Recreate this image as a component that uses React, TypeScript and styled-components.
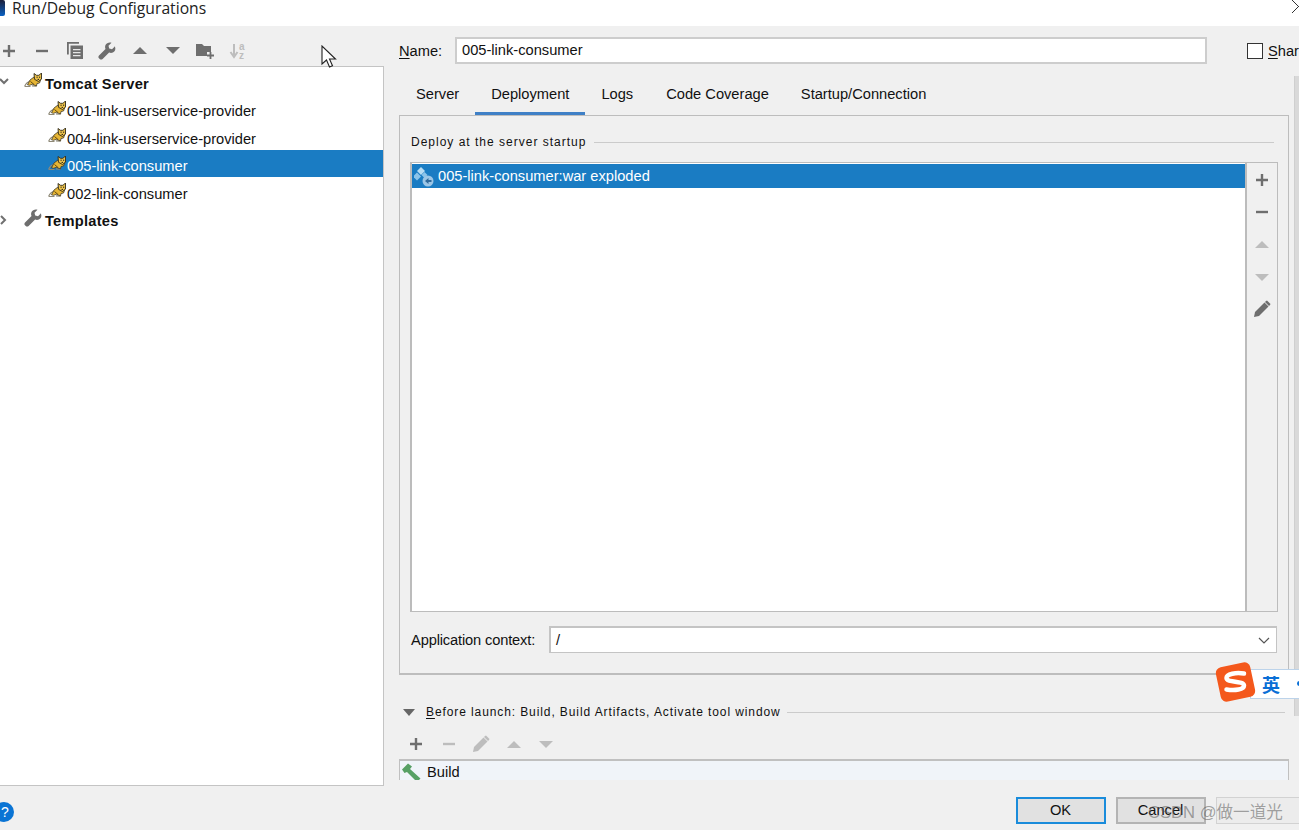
import React from "react";
import styled, { createGlobalStyle } from "styled-components";

const Global = createGlobalStyle`
  html, body { margin: 0; padding: 0; background: #f0f0f0; overflow: hidden; }
  * { box-sizing: border-box; }
  #root { font-family: "Liberation Sans", Arial, sans-serif; font-size: 14.67px; color: #111; }
`;

const Dialog = styled.div`
  position: relative; width: 1299px; height: 830px; display: flex; flex-direction: column;
  background: #f0f0f0; overflow: hidden;
`;
const TitleBar = styled.div`
  height: 26px; flex: none; background: #fff; display: flex; align-items: flex-start; justify-content: space-between;
`;
const TitleLeft = styled.div`display: flex; align-items: center; gap: 7px; height: 16px;`;
const AppMark = styled.span`width: 5px; height: 16px; background: linear-gradient(#1b1f3a, #0b62c4); border-radius: 0 2px 2px 0;`;
const TitleText = styled.span`font-family: "Open Sans", sans-serif; font-size: 15.7px; line-height: 16px; color: #222; white-space: nowrap;`;
const CloseMark = styled.svg`width: 7px; height: 13px; flex: none;`;

const Main = styled.div`flex: 1; min-height: 0; display: flex;`;
const Sidebar = styled.aside`width: 384px; flex: none; display: flex; flex-direction: column;`;
const Toolbar = styled.div`height: 40px; flex: none; display: flex; align-items: center; margin-left: -7px; padding-top: 9px;`;
const ToolSlot = styled.span`width: 32.7px; height: 18px; display: flex; align-items: center; justify-content: center; flex: none;`;
const Tree = styled.div`
  flex: 1; background: #fff; border: solid #c4c4c4; border-width: 1px 1px 1px 0;
`;
const Row = styled.div<{ $level: number; $selected?: boolean; $bold?: boolean }>`
  height: 27.5px; display: flex; align-items: center;
  padding-left: ${p => (p.$level ? 48 : 0)}px;
  background: ${p => (p.$selected ? "#1a7cc3" : "transparent")};
  color: ${p => (p.$selected ? "#fff" : "#111")};
  font-weight: ${p => (p.$bold ? 700 : 400)};
  letter-spacing: ${p => (p.$bold ? 0.25 : 0)}px;
  white-space: nowrap;
`;
const RowText = styled.span<{ $gap: number }>`margin-left: ${p => p.$gap}px; padding-top: 6px;`;
const Chevron = styled.svg`width: 24px; height: 12px; flex: none; margin-top: 3px;`;

const Content = styled.section`flex: 1; min-width: 0; padding: 11px 0 0 15px; display: flex; flex-direction: column; overflow: hidden;`;
const NameRow = styled.div`display: flex; align-items: center; height: 27px; flex: none;`;
const Underlined = styled.span`text-decoration: underline; text-underline-offset: 2px;`;
const NameLabel = styled.label`width: 57px; flex: none;`;
const NameInput = styled.div`
  width: 752px; height: 27px; flex: none; background: #fff; border: 2px solid #cdcdcd; padding: 0 4px 0 5px;
  line-height: 23px; white-space: nowrap; margin-left: -1px;
`;
const Share = styled.div`display: flex; align-items: center; gap: 5px; margin-left: 40px; white-space: nowrap;`;
const Check = styled.span`width: 16px; height: 16px; background: #fff; border: 1px solid #333; flex: none;`;

const Tabs = styled.nav`display: flex; height: 38px; margin-top: 14px; flex: none; padding-left: 1px;`;
const Tab = styled.div<{ $active?: boolean; $extra?: number }>`
  padding: 7px 16px 0; margin-left: ${p => p.$extra ?? 0}px; height: 38px; white-space: nowrap;
  line-height: 18px; border-bottom: 4px solid ${p => (p.$active ? "#3f80c6" : "transparent")};
`;

const Panel = styled.div`
  width: 890px; height: 560px; flex: none; margin-top: -1px; display: flex; flex-direction: column;
  border: 1px solid #bdbdbd; border-bottom-width: 2px; padding: 18px 10px 0 10px;
`;
const Legend = styled.div`display: flex; align-items: center; gap: 8px; height: 16px; font-size: 12px; letter-spacing: 1px; padding: 0 4px 0 1px; white-space: nowrap;`;
const Rule = styled.span`flex: 1; height: 1px; background: #cbcbcb;`;
const ListBox = styled.div`
  height: 450px; margin-top: 12px; flex: none; display: flex; border: solid #bcbcbc; border-width: 1px 1px 1px 2px;
`;
const ListArea = styled.div`flex: 1; background: #fff; padding-top: 1px;`;
const ListRow = styled.div`height: 24px; background: #1a7cc3; color: #fff; display: flex; align-items: center; padding-left: 2px; gap: 3px;`;
const ListTools = styled.div`width: 32px; flex: none; border-left: 2px solid #bcbcbc; display: flex; flex-direction: column; align-items: center; gap: 0; padding-top: 1px;`;
const ListTool = styled.span`height: 32.3px; display: flex; align-items: center; justify-content: center;`;
const ContextRow = styled.div`display: flex; align-items: center; margin-top: 14px; height: 27px; padding-right: 1px;`;
const ContextLabel = styled.label`width: 139px; flex: none; padding-left: 1px; white-space: nowrap; letter-spacing: -0.15px;`;
const Combo = styled.div`
  flex: 1; height: 27px; background: #fff; border: 1px solid #c4c4c4; border-width: 2px 1px 1px 2px;
  display: flex; align-items: center; justify-content: space-between; padding: 0 6px 0 5px;
`;

const BeforeHead = styled.div`display: flex; align-items: center; margin-top: 29px; height: 16px; width: 886px; flex: none; font-size: 12px; letter-spacing: 0.9px; white-space: nowrap;`;
const BeforeTri = styled.svg`width: 12px; height: 8px; margin-left: 4px; margin-right: 11px; flex: none;`;
const BeforeRule = styled.span`flex: 1; height: 1px; background: #cbcbcb; margin-left: 6px;`;
const BeforeTools = styled.div`display: flex; align-items: center; height: 22px; margin-top: 13px; flex: none; margin-left: 1px;`;
const BeforeTool = styled.span`width: 32.5px; display: flex; align-items: center; justify-content: center;`;
const BuildList = styled.div`
  width: 890px; height: 21px; flex: none; margin-top: 4px; background: #f0f4f9; border: solid #c0c0c0; border-width: 2px 1px 0 1px;
  display: flex; align-items: center; padding: 2px 0 0 2px; gap: 6px; overflow: hidden;
`;

const Footer = styled.footer`height: 44px; flex: none; display: flex; align-items: flex-start; padding-top: 11px; justify-content: space-between;`;
const Help = styled.span`
  width: 20px; height: 20px; border-radius: 50%; background: #0a74d4; color: #fff; margin: 5px 0 0 -6px; display: flex;
  align-items: center; justify-content: center; font-size: 14px; padding-left: 2px;
`;
const Buttons = styled.div`display: flex; gap: 10px; margin-right: -5px;`;
const Button = styled.div<{ $primary?: boolean; $ghost?: boolean }>`
  width: ${p => (p.$ghost ? 88 : 90)}px; height: 27px; display: flex; align-items: center; justify-content: center;
  padding: 0 1px 2px 0;
  background: ${p => (p.$ghost ? "#ececec" : "#e1e1e1")};
  border: ${p => (p.$primary ? "2px solid #1a8cdb" : p.$ghost ? "1px solid #d2d2d2" : "2px solid #b4b4b4")};
  color: #111;
`;

const Scrollbar = styled.div`position: absolute; left: 1294px; top: 76px; width: 5px; height: 640px; background: #d9d9d9; border-left: 1px solid #cfcfcf;`;
const Cursor = styled.svg`position: absolute; left: 321px; top: 45px; width: 16px; height: 24px;`;
const Ime = styled.div`
  position: absolute; left: 1250px; top: 669px; width: 60px; height: 30px; background: #fff; border: 1px solid #bcd3ea;
  color: #0a6fd6; font-family: "Noto Sans CJK SC", sans-serif; font-weight: 700; font-size: 18px; line-height: 28px; padding-left: 11px;
`;
const ImeDot = styled.span`position: absolute; left: 46px; top: 11px; width: 5px; height: 5px; border-radius: 50%; background: #0a6fd6;`;
const ImeLogo = styled.svg`position: absolute; left: 1215px; top: 662px; width: 41px; height: 40px;`;
const Watermark = styled.div`
  position: absolute; left: 1148px; top: 801px; font-size: 16.6px; line-height: 24px; color: rgba(90, 90, 90, 0.55); white-space: nowrap;
  font-family: "Liberation Sans", "Noto Sans CJK SC", sans-serif;
`;

const G = "#6e6e6e";
const L = "#bdbdbd";
const Plus = ({ c = G }: { c?: string }) => <svg width="14" height="14" viewBox="0 0 14 14"><path d="M1 7h12M7 1v12" stroke={c} strokeWidth="2.400" /></svg>;
const Minus = ({ c = G }: { c?: string }) => <svg width="14" height="14" viewBox="0 0 14 14"><path d="M1 7h12" stroke={c} strokeWidth="2.400" /></svg>;
const Up = ({ c = G }: { c?: string }) => <svg width="16" height="9" viewBox="0 0 16 9"><path d="M8 1l7 7H1z" fill={c} /></svg>;
const Down = ({ c = G }: { c?: string }) => <svg width="16" height="9" viewBox="0 0 16 9"><path d="M1 1h14L8 8z" fill={c} /></svg>;
const Copy = () => (
  <svg width="16" height="17" viewBox="0 0 16 17">
    <path d="M0 12.500V0h12v1.800H1.800v10.700z" fill={G} />
    <path d="M3.500 3.500H16V17H3.500z" fill={G} />
    <path d="M6 7h7.500v1.300H6zM6 10h7.500v1.300H6zM6 13h7.500v1.300H6z" fill="#e6e6e6" />
  </svg>
);
const Wrench = ({ c = G, s = 18 }: { c?: string; s?: number }) => (
  <svg width={s} height={s} viewBox="0 0 18 18">
    <path d="M17 4.200l-3 3-2.800-.7-.7-2.800 3-3c-2.400-.7-5 .2-6 2.400-.6 1.300-.5 2.700 0 3.800L1 13.400c-.8.800-.8 2.100 0 2.900l.7.7c.8.800 2.100.8 2.900 0l6.500-6.500c1.200.5 2.600.5 3.800 0 2.200-1 3-3.500 2.100-5.800z" fill={c} />
  </svg>
);
const FolderPlus = () => (
  <svg width="18" height="16" viewBox="0 0 18 16">
    <path d="M0 1h6l2 2h7v6h-4v4H0z" fill={G} />
    <path d="M11 12.500h7M14.500 9v7" stroke={G} strokeWidth="1.800" />
  </svg>
);
const SortAz = () => (
  <svg width="18" height="18" viewBox="0 0 18 18">
    <path d="M5 2v11M1.500 10L5 15l3.500-5" stroke={L} strokeWidth="2" fill="none" />
    <text x="10" y="8" fontSize="10" fontWeight="700" fill={L} fontFamily="Liberation Sans, sans-serif">a</text>
    <text x="10" y="17" fontSize="10" fontWeight="700" fill={L} fontFamily="Liberation Sans, sans-serif">z</text>
  </svg>
);
const Pencil = ({ c = G }: { c?: string }) => (
  <svg width="18" height="18" viewBox="0 0 18 18">
    <path d="M1 17l1-5L11.500 2.500l4 4L6 16z" fill={c} />
    <path d="M13 1l1-.5 3.500 3.500-.5 1-1 1-4-4z" fill={c} />
  </svg>
);
const Tomcat = () => (
  <svg width="18" height="15" viewBox="0 0 18 15" style={{ flex: "none" }}>
    <path d="M0.500 13.500C2 10 4 8.500 7 8M1 13.500h5.500M8 12.800l4.500.4" stroke="#8f8a78" strokeWidth="1.200" fill="none" />
    <path d="M3.500 11.800L6 7 10 4 17 6 15.500 10 13 10.500 12.500 13 8.500 11.300 5.500 12.300z" fill="#e6b535" stroke="#3f3826" strokeWidth="0.800" />
    <path d="M10 .5L12.500 2.300h2.400L17.500 0 17.500 6 14.500 8.500 10.500 6.300z" fill="#edc24a" stroke="#2f2a1a" strokeWidth="0.900" />
    <path d="M12.500 4.200h1.200M15 4.200h1.200M13.600 6.400h1.400" stroke="#1c1c1c" strokeWidth="1" />
    <path d="M6.500 8.500l3.500 3" stroke="#5f4810" strokeWidth="1" />
  </svg>
);
const Artifact = () => (
  <svg width="21" height="21" viewBox="0 0 21 21" style={{ flex: "none" }}>
    <path d="M7 1l4 4-4 4-4-4z" fill="#b7dcf3" />
    <path d="M3 6.500l4 4-4 4-4-4z" fill="#8cc4ea" />
    <path d="M10.500 6l3 3-3 3-3-3z" fill="#8cc4ea" />
    <circle cx="14" cy="15" r="5.500" fill="#9cc6e6" />
    <path d="M11 15l3.500-3v2h3v2h-3v2z" fill="#2f6a9c" />
  </svg>
);
const Hammer = () => (
  <svg width="19" height="19" viewBox="0 0 19 19" style={{ flex: "none", marginTop: 1 }}>
    <path d="M0 6.500L6 0.500 10 3.500 8 6 18.500 15.500 15 19 5 9 2.500 10z" fill="#57a064" />
  </svg>
);

const tools = [<Plus />, <Minus />, <Copy />, <Wrench />, <Up />, <Down />, <FolderPlus />, <SortAz />];

export default function App() {
  return (
    <Dialog>
      <Global />
      <TitleBar>
        <TitleLeft>
          <AppMark />
          <TitleText>Run/Debug Configurations</TitleText>
        </TitleLeft>
        <CloseMark viewBox="0 0 7 13"><path d="M0 0l7 7M0 13l6-6" stroke="#333" strokeWidth="1" fill="none" /></CloseMark>
      </TitleBar>
      <Main>
        <Sidebar>
          <Toolbar>
            {tools.map((t, i) => <ToolSlot key={i}>{t}</ToolSlot>)}
          </Toolbar>
          <Tree>
            <Row $level={0} $bold>
              <Chevron viewBox="0 0 24 12"><path d="M0 3l4 4 4-4" stroke="#707070" strokeWidth="2" fill="none" /></Chevron>
              <Tomcat />
              <RowText $gap={3}>Tomcat Server</RowText>
            </Row>
            <Row $level={1}><Tomcat /><RowText $gap={1}>001-link-userservice-provider</RowText></Row>
            <Row $level={1}><Tomcat /><RowText $gap={1}>004-link-userservice-provider</RowText></Row>
            <Row $level={1} $selected><Tomcat /><RowText $gap={1}>005-link-consumer</RowText></Row>
            <Row $level={1}><Tomcat /><RowText $gap={1}>002-link-consumer</RowText></Row>
            <Row $level={0} $bold>
              <Chevron viewBox="0 0 24 12"><path d="M1 2l4 4-4 4" stroke="#707070" strokeWidth="2" fill="none" /></Chevron>
              <Wrench s={18} />
              <RowText $gap={3}>Templates</RowText>
            </Row>
          </Tree>
        </Sidebar>
        <Content>
          <NameRow>
            <NameLabel><Underlined>N</Underlined>ame:</NameLabel>
            <NameInput>005-link-consumer</NameInput>
            <Share><Check /><span><Underlined>S</Underlined>hare</span></Share>
          </NameRow>
          <Tabs>
            <Tab>Server</Tab>
            <Tab $active>Deployment</Tab>
            <Tab>Logs</Tab>
            <Tab $extra={1}>Code Coverage</Tab>
            <Tab>Startup/Connection</Tab>
          </Tabs>
          <Panel>
            <Legend>Deploy at the server startup<Rule /></Legend>
            <ListBox>
              <ListArea>
                <ListRow><Artifact />005-link-consumer:war exploded</ListRow>
              </ListArea>
              <ListTools>
                <ListTool><Plus /></ListTool>
                <ListTool><Minus /></ListTool>
                <ListTool><Up c={L} /></ListTool>
                <ListTool><Down c={L} /></ListTool>
                <ListTool><Pencil /></ListTool>
              </ListTools>
            </ListBox>
            <ContextRow>
              <ContextLabel>Application context:</ContextLabel>
              <Combo>
                <span>/</span>
                <svg width="12" height="7" viewBox="0 0 12 7"><path d="M1 1l5 5 5-5" stroke="#555" strokeWidth="1.200" fill="none" /></svg>
              </Combo>
            </ContextRow>
          </Panel>
          <BeforeHead>
            <BeforeTri viewBox="0 0 12 8"><path d="M0 1h12L6 8z" fill="#666" /></BeforeTri>
            <span><Underlined>B</Underlined>efore launch: Build, Build Artifacts, Activate tool window</span>
            <BeforeRule />
          </BeforeHead>
          <BeforeTools>
            <BeforeTool><Plus /></BeforeTool>
            <BeforeTool><Minus c={L} /></BeforeTool>
            <BeforeTool><Pencil c={L} /></BeforeTool>
            <BeforeTool><Up c={L} /></BeforeTool>
            <BeforeTool><Down c={L} /></BeforeTool>
          </BeforeTools>
          <BuildList><Hammer />Build</BuildList>
        </Content>
      </Main>
      <Footer>
        <Help>?</Help>
        <Buttons>
          <Button $primary>OK</Button>
          <Button>Cancel</Button>
          <Button $ghost />
        </Buttons>
      </Footer>
      <Scrollbar />
      <Cursor viewBox="0 0 16 24">
        <path d="M1 1v18l4.500-4 3 7 3-1.300-3-6.700h6z" fill="#fff" stroke="#222" strokeWidth="1.100" />
      </Cursor>
      <Ime>英<ImeDot /></Ime>
      <ImeLogo viewBox="0 0 41 40">
        <rect x="3" y="2.500" width="35" height="35" rx="6" fill="#f4581c" transform="rotate(-12 20.500 20)" />
        <path d="M29 11.500C21 10 11.500 12 11.500 16c0 5 17.500 2.500 17.500 7.500 0 4-9 5.500-17.500 4" stroke="#fff" strokeWidth="4.500" fill="none" strokeLinecap="round" />
      </ImeLogo>
      <Watermark>CSDN @做一道光</Watermark>
    </Dialog>
  );
}
